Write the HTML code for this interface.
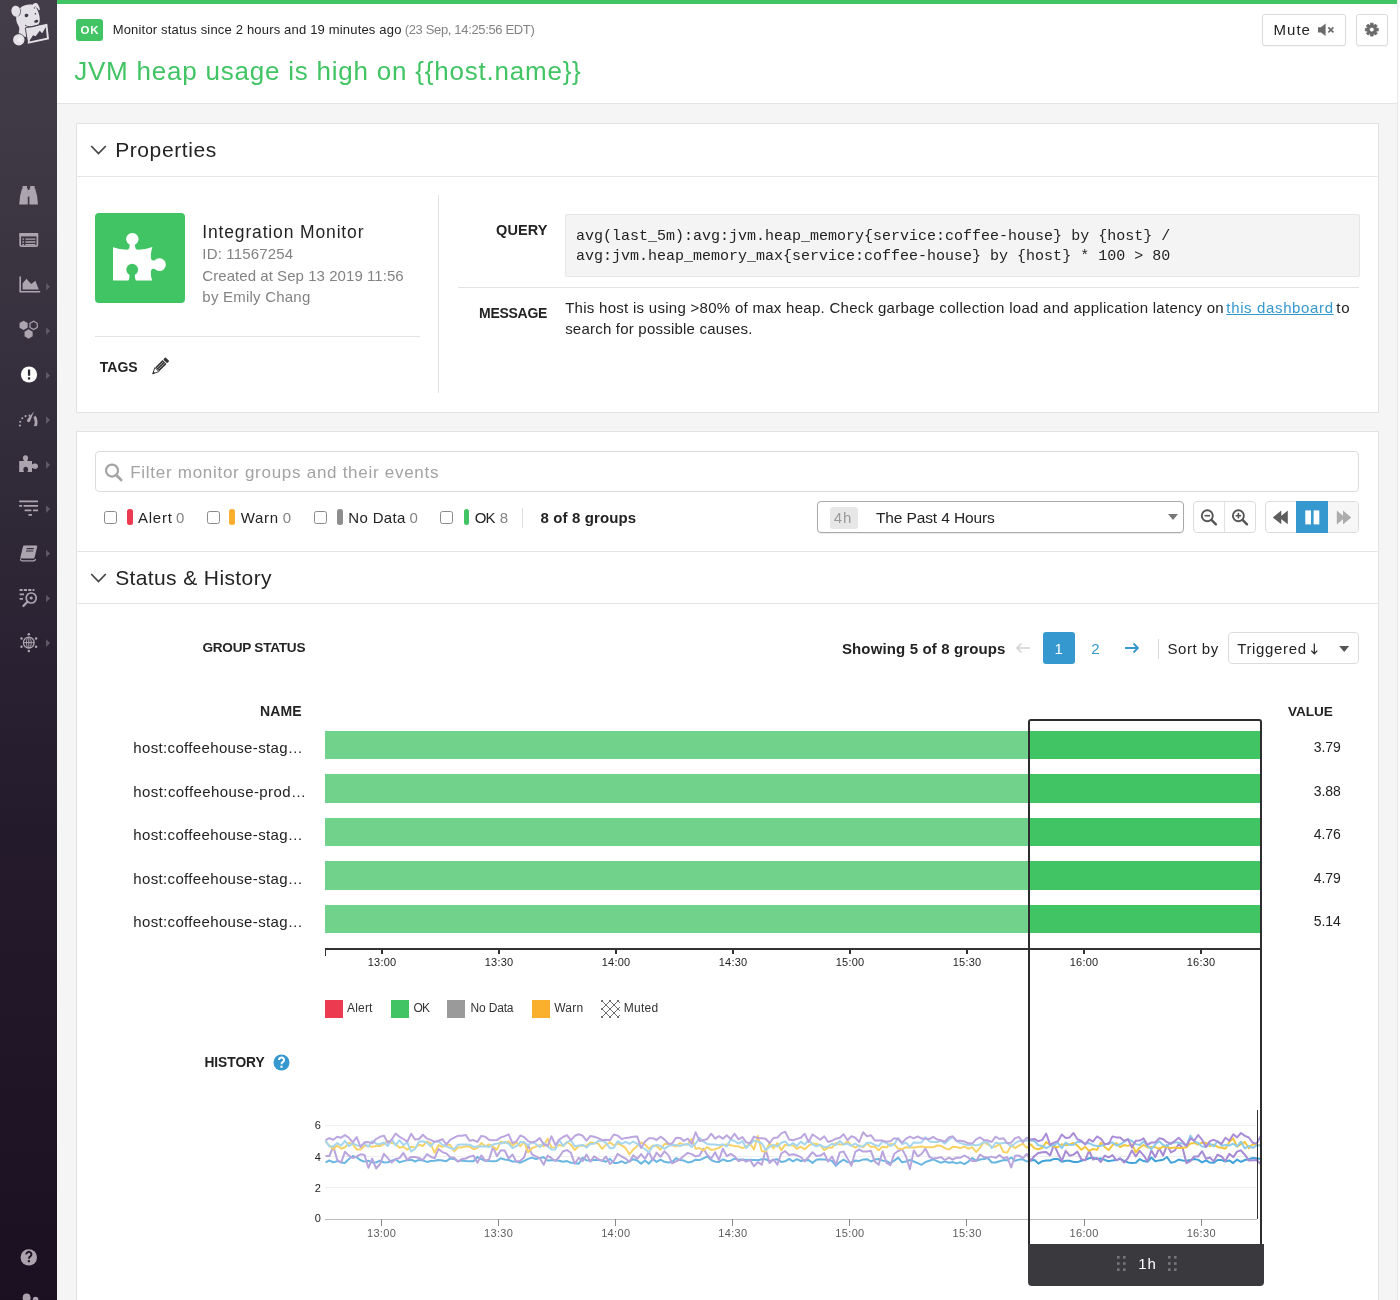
<!DOCTYPE html>
<html><head><meta charset="utf-8"><title>Monitor</title>
<style>
html,body{margin:0;padding:0;}
body{width:1400px;height:1300px;overflow:hidden;position:relative;background:#f5f5f5;font-family:"Liberation Sans",sans-serif;}
.t{position:absolute;white-space:nowrap;font-family:"Liberation Sans",sans-serif;}
</style></head><body>
<div style="position:absolute;left:57px;top:0px;width:1343px;height:1300px;background:#f5f5f5;"></div>
<div style="position:absolute;left:1397px;top:0px;width:3px;height:1300px;background:#fcfcfc;border-left:1px solid #e9e9e9;box-sizing:border-box;"></div>
<div style="position:absolute;left:57px;top:0px;width:1340px;height:103px;background:#fff;border-bottom:1px solid #e4e4e4;"></div>
<div style="position:absolute;left:57px;top:0px;width:1340px;height:4px;background:#41c464;"></div>
<div style="position:absolute;left:76px;top:18.5px;width:27px;height:22.5px;background:#41c464;border-radius:3px;"></div>
<div style="position:absolute;left:1262px;top:14px;width:84px;height:31.5px;box-sizing:border-box;border:1px solid #dadada;border-radius:3px;background:#fff;box-shadow:0 1px 1px rgba(0,0,0,.04);"></div>
<div style="position:absolute;left:1356px;top:14px;width:32px;height:31.5px;box-sizing:border-box;border:1px solid #dadada;border-radius:3px;background:#fff;box-shadow:0 1px 1px rgba(0,0,0,.04);"></div>
<svg style="position:absolute;left:1316px;top:22px" width="20" height="16" viewBox="1316 22 20 16"><path d="M1318 27.3 H1321 L1325.6 23.6 V36 L1321 32.4 H1318 Z" fill="#6a6a6a"/><path d="M1328.3 27.4 L1333.4 32.4 M1333.4 27.4 L1328.3 32.4" stroke="#6a6a6a" stroke-width="1.7"/></svg>
<svg style="position:absolute;left:1362px;top:20px" width="20" height="20" viewBox="1362 20 20 20"><path d="M1378.25 28.21 L1378.25 30.99 L1376.54 30.86 L1376.04 32.06 L1377.34 33.18 L1375.38 35.14 L1374.26 33.84 L1373.06 34.34 L1373.19 36.05 L1370.41 36.05 L1370.54 34.34 L1369.34 33.84 L1368.22 35.14 L1366.26 33.18 L1367.56 32.06 L1367.06 30.86 L1365.35 30.99 L1365.35 28.21 L1367.06 28.34 L1367.56 27.14 L1366.26 26.02 L1368.22 24.06 L1369.34 25.36 L1370.54 24.86 L1370.41 23.15 L1373.19 23.15 L1373.06 24.86 L1374.26 25.36 L1375.38 24.06 L1377.34 26.02 L1376.04 27.14 L1376.54 28.34 Z M1369.40 29.60 a2.40 2.40 0 1 0 4.80 0 a2.40 2.40 0 1 0 -4.80 0 Z" fill="#6a6a6a" fill-rule="evenodd" stroke="#6a6a6a" stroke-width="0.8" stroke-linejoin="round"/></svg>
<div style="position:absolute;left:76px;top:123px;width:1303px;height:290px;box-sizing:border-box;border:1px solid #e2e2e2;background:#fff;"></div>
<div style="position:absolute;left:77px;top:176px;width:1301px;height:1px;background:#e6e6e6;"></div>
<svg style="position:absolute;left:90px;top:144px" width="18" height="12" viewBox="0 0 18 12"><path d="M1.2 2 L8.5 9.6 L15.8 2" fill="none" stroke="#444" stroke-width="1.7"/></svg>
<div style="position:absolute;left:95px;top:213px;width:90px;height:90px;background:#41c464;border-radius:4px;"></div>
<svg style="position:absolute;left:95px;top:213px" width="90" height="90" viewBox="95 213 90 90"><path d="M113 247.2 Q120.5 250 128.2 249.6 Q129.8 248.6 129.7 244.8 A6.2 6.2 0 1 1 135 244.8 Q134.9 248.6 136.5 249.6 Q144.5 250 152.4 247 Q150 254 151.3 259.4 Q152.4 260.8 154.8 260.2 A6.4 6.4 0 1 1 154.8 269 Q152.4 268.4 151.3 269.8 Q150 275 152.2 280.4 L113 280.4 Z" fill="#fff"/><circle cx="132.2" cy="269.6" r="5.9" fill="#41c464"/><path d="M129.6 273.5 H134.8 Q134.7 278.4 136 281 H128.4 Q129.7 278.4 129.6 273.5 Z" fill="#41c464"/></svg>
<div style="position:absolute;left:95px;top:336px;width:325px;height:1px;background:#e2e2e2;"></div>
<div style="position:absolute;left:438px;top:195px;width:1px;height:198px;background:#e2e2e2;"></div>
<svg style="position:absolute;left:150px;top:356px" width="20" height="20" viewBox="150 356 20 20"><g transform="translate(160 366.5) rotate(45)"><rect x="-2.8" y="-10.4" width="5.6" height="3.2" rx="1.1" fill="#333"/><rect x="-2.8" y="-6.4" width="5.6" height="10.2" fill="#333"/><path d="M-2.8 4.4 H2.8 L0 10.4 Z" fill="none" stroke="#333" stroke-width="0.9"/><path d="M-1.1 8 H1.1 L0 10.6 Z" fill="#333"/><path d="M-0.95 -5.6 V3.2 M0.95 -5.6 V3.2" stroke="#fff" stroke-width="0.55"/></g></svg>
<div style="position:absolute;left:565px;top:213.5px;width:794.5px;height:63.5px;box-sizing:border-box;border:1px solid #e6e6e6;background:#f4f4f4;border-radius:2px;"></div>
<div style="position:absolute;left:458px;top:287px;width:901px;height:1px;background:#e2e2e2;"></div>
<div style="position:absolute;left:76px;top:431px;width:1303px;height:900px;box-sizing:border-box;border:1px solid #e2e2e2;background:#fff;"></div>
<div style="position:absolute;left:95px;top:451px;width:1264px;height:40.5px;box-sizing:border-box;border:1px solid #dcdcdc;border-radius:4px;background:#fff;"></div>
<svg style="position:absolute;left:103px;top:462px" width="22" height="20" viewBox="0 0 22 20"><circle cx="9" cy="8.6" r="6" fill="none" stroke="#a4a4a4" stroke-width="2.2"/><path d="M13.2 13 L18.2 18" stroke="#a4a4a4" stroke-width="2.6" stroke-linecap="round"/></svg>
<div style="position:absolute;left:103.8px;top:510.9px;width:13px;height:13px;box-sizing:border-box;border:1px solid #8a8a8a;border-radius:2.5px;background:#fff;"></div>
<div style="position:absolute;left:127.3px;top:509.3px;width:5.8px;height:15.7px;background:#ec3b50;border-radius:2.5px;"></div>
<div style="position:absolute;left:206.6px;top:510.9px;width:13px;height:13px;box-sizing:border-box;border:1px solid #8a8a8a;border-radius:2.5px;background:#fff;"></div>
<div style="position:absolute;left:229.3px;top:509.3px;width:5.8px;height:15.7px;background:#fbb02d;border-radius:2.5px;"></div>
<div style="position:absolute;left:313.6px;top:510.9px;width:13px;height:13px;box-sizing:border-box;border:1px solid #8a8a8a;border-radius:2.5px;background:#fff;"></div>
<div style="position:absolute;left:337.1px;top:509.3px;width:5.8px;height:15.7px;background:#8e8e8e;border-radius:2.5px;"></div>
<div style="position:absolute;left:440px;top:510.9px;width:13px;height:13px;box-sizing:border-box;border:1px solid #8a8a8a;border-radius:2.5px;background:#fff;"></div>
<div style="position:absolute;left:463.6px;top:509.3px;width:5.8px;height:15.7px;background:#41c464;border-radius:2.5px;"></div>
<div style="position:absolute;left:522px;top:508px;width:1px;height:20px;background:#dedede;"></div>
<div style="position:absolute;left:817px;top:501px;width:367px;height:32px;box-sizing:border-box;border:1px solid #a9a9a9;border-radius:4px;background:#fff;box-shadow:0 1px 1px rgba(0,0,0,.08);"></div>
<div style="position:absolute;left:829.7px;top:507px;width:28px;height:21.5px;background:#e7e7e7;border-radius:3px;"></div>
<svg style="position:absolute;left:1167.5px;top:514px" width="10" height="6" viewBox="0 0 10 6"><path d="M0 0 H10 L5 6 Z" fill="#777"/></svg>
<div style="position:absolute;left:1193px;top:501px;width:62.5px;height:32px;box-sizing:border-box;border:1px solid #dcdcdc;border-radius:4px;background:#fff;"></div>
<div style="position:absolute;left:1224px;top:502px;width:1px;height:30px;background:#e2e2e2;"></div>
<svg style="position:absolute;left:1195px;top:503px" width="60" height="28" viewBox="1195 503 60 28"><circle cx="1207.3" cy="515.7" r="5.5" fill="none" stroke="#555" stroke-width="1.9"/><path d="M1211.5 519.9 L1215.9 524.3" stroke="#555" stroke-width="2.4" stroke-linecap="round"/><path d="M1204.5 515.7 H1210.1" stroke="#555" stroke-width="1.6"/><circle cx="1238.4" cy="515.7" r="5.5" fill="none" stroke="#555" stroke-width="1.9"/><path d="M1242.6 519.9 L1247 524.3" stroke="#555" stroke-width="2.4" stroke-linecap="round"/><path d="M1235.6 515.7 H1241.2" stroke="#555" stroke-width="1.6"/><path d="M1238.4 512.9 V518.5" stroke="#555" stroke-width="1.6"/></svg>
<div style="position:absolute;left:1265px;top:501px;width:94px;height:32px;box-sizing:border-box;border:1px solid #dcdcdc;border-radius:4px;background:#fff;"></div>
<div style="position:absolute;left:1328px;top:502px;width:30px;height:30px;background:#f6f6f6;border-radius:0 3px 3px 0;"></div>
<div style="position:absolute;left:1296px;top:501px;width:32px;height:32px;background:#3598cf;"></div>
<svg style="position:absolute;left:1266px;top:503px" width="92" height="28" viewBox="1266 503 92 28"><path d="M1272.8 517.4 L1281.3 510.6 L1281.3 524.2 Z M1279.3 517.4 L1287.8 510.6 L1287.8 524.2 Z" fill="#5e5e5e"/><rect x="1305.3" y="510.4" width="5.7" height="14" fill="#fff"/><rect x="1313.6" y="510.4" width="5.7" height="14" fill="#fff"/><path d="M1336.8 510.4 L1345 517.4 L1336.8 524.4 Z M1343 510.4 L1351.2 517.4 L1343 524.4 Z" fill="#adadad"/></svg>
<div style="position:absolute;left:77px;top:551px;width:1301px;height:1px;background:#e4e4e4;"></div>
<svg style="position:absolute;left:90px;top:572px" width="18" height="12" viewBox="0 0 18 12"><path d="M1.2 2 L8.5 9.6 L15.8 2" fill="none" stroke="#444" stroke-width="1.7"/></svg>
<div style="position:absolute;left:77px;top:603px;width:1301px;height:1px;background:#e4e4e4;"></div>
<svg style="position:absolute;left:1015px;top:642px" width="16" height="12" viewBox="0 0 16 12"><path d="M15 6 H2 M6.5 1.5 L2 6 L6.5 10.5" fill="none" stroke="#d4d4d4" stroke-width="1.7"/></svg>
<div style="position:absolute;left:1042.5px;top:632px;width:32px;height:32px;background:#3598cf;border-radius:3px;"></div>
<svg style="position:absolute;left:1124px;top:642px" width="16" height="12" viewBox="0 0 16 12"><path d="M1 6 H14 M9.5 1.5 L14 6 L9.5 10.5" fill="none" stroke="#3598cf" stroke-width="1.8"/></svg>
<div style="position:absolute;left:1158px;top:639px;width:1px;height:19.5px;background:#d8d8d8;"></div>
<div style="position:absolute;left:1227.5px;top:632px;width:131.5px;height:31.5px;box-sizing:border-box;border:1px solid #dcdcdc;border-radius:4px;background:#fff;"></div>
<svg style="position:absolute;left:1309px;top:642px" width="11" height="14" viewBox="0 0 11 14"><path d="M5.3 1.6 V11.4 M2.3 8.6 L5.3 11.8 L8.3 8.6" fill="none" stroke="#2c2c2c" stroke-width="1.25"/></svg>
<svg style="position:absolute;left:1339.3px;top:646px" width="10.4" height="6" viewBox="0 0 10 6"><path d="M0 0 H10 L5 6 Z" fill="#555"/></svg>
<div style="position:absolute;left:324.6px;top:730.6px;width:704.4px;height:28.4px;background:#71d38b;"></div>
<div style="position:absolute;left:1029px;top:730.6px;width:231px;height:28.4px;background:#41c464;"></div>
<div style="position:absolute;left:324.6px;top:774.2px;width:704.4px;height:28.4px;background:#71d38b;"></div>
<div style="position:absolute;left:1029px;top:774.2px;width:231px;height:28.4px;background:#41c464;"></div>
<div style="position:absolute;left:324.6px;top:817.8px;width:704.4px;height:28.4px;background:#71d38b;"></div>
<div style="position:absolute;left:1029px;top:817.8px;width:231px;height:28.4px;background:#41c464;"></div>
<div style="position:absolute;left:324.6px;top:861.4px;width:704.4px;height:28.4px;background:#71d38b;"></div>
<div style="position:absolute;left:1029px;top:861.4px;width:231px;height:28.4px;background:#41c464;"></div>
<div style="position:absolute;left:324.6px;top:905px;width:704.4px;height:28.4px;background:#71d38b;"></div>
<div style="position:absolute;left:1029px;top:905px;width:231px;height:28.4px;background:#41c464;"></div>
<div style="position:absolute;left:324.6px;top:948px;width:936.4px;height:1.6px;background:#333;"></div>
<div style="position:absolute;left:324.6px;top:948px;width:1.5px;height:8px;background:#333;"></div>
<div style="position:absolute;left:1259.5px;top:948px;width:1.5px;height:8px;background:#333;"></div>
<div style="position:absolute;left:381.3px;top:948px;width:1.4px;height:6px;background:#333;"></div>
<div style="position:absolute;left:498.3px;top:948px;width:1.4px;height:6px;background:#333;"></div>
<div style="position:absolute;left:615.3px;top:948px;width:1.4px;height:6px;background:#333;"></div>
<div style="position:absolute;left:732.3px;top:948px;width:1.4px;height:6px;background:#333;"></div>
<div style="position:absolute;left:849.3px;top:948px;width:1.4px;height:6px;background:#333;"></div>
<div style="position:absolute;left:966.3px;top:948px;width:1.4px;height:6px;background:#333;"></div>
<div style="position:absolute;left:1083.3px;top:948px;width:1.4px;height:6px;background:#333;"></div>
<div style="position:absolute;left:1200.3px;top:948px;width:1.4px;height:6px;background:#333;"></div>
<div style="position:absolute;left:324.6px;top:1000px;width:18.3px;height:18px;background:#ec3b50;"></div>
<div style="position:absolute;left:391.1px;top:1000px;width:18.3px;height:18px;background:#41c464;"></div>
<div style="position:absolute;left:447.1px;top:1000px;width:18.3px;height:18px;background:#9a9a9a;"></div>
<div style="position:absolute;left:532.1px;top:1000px;width:18.3px;height:18px;background:#fbb02d;"></div>
<svg style="position:absolute;left:600.7px;top:1000px" width="19" height="18" viewBox="0 0 19 18"><defs><pattern id="mh" width="8" height="8" x="1" y="1" patternUnits="userSpaceOnUse"><path d="M0 0 L8 8 M8 0 L0 8" stroke="#6f6f6f" stroke-width="1"/></pattern></defs><rect width="19" height="18" fill="url(#mh)"/></svg>
<svg style="position:absolute;left:272.6px;top:1053.6px" width="17" height="17" viewBox="0 0 17 17"><circle cx="8.5" cy="8.5" r="8" fill="#3598cf"/><path d="M5.95 6 a2.55 2.45 0 1 1 4 1.95 q-1.45 0.8 -1.45 2.3" fill="none" stroke="#fff" stroke-width="2"/><rect x="7.45" y="11.7" width="2.1" height="2.1" fill="#fff"/></svg>
<div style="position:absolute;left:325px;top:1124.92px;width:931px;height:1px;background:#eeeeee;"></div>
<div style="position:absolute;left:325px;top:1156.18px;width:931px;height:1px;background:#eeeeee;"></div>
<div style="position:absolute;left:325px;top:1187.44px;width:931px;height:1px;background:#eeeeee;"></div>
<div style="position:absolute;left:325px;top:1218.8px;width:932px;height:1.2px;background:#bdbdbd;"></div>
<div style="position:absolute;left:380.9px;top:1219px;width:1px;height:6.5px;background:#8a8a8a;"></div>
<div style="position:absolute;left:498px;top:1219px;width:1px;height:6.5px;background:#8a8a8a;"></div>
<div style="position:absolute;left:615.1px;top:1219px;width:1px;height:6.5px;background:#8a8a8a;"></div>
<div style="position:absolute;left:732.2px;top:1219px;width:1px;height:6.5px;background:#8a8a8a;"></div>
<div style="position:absolute;left:849.3px;top:1219px;width:1px;height:6.5px;background:#8a8a8a;"></div>
<div style="position:absolute;left:966.4px;top:1219px;width:1px;height:6.5px;background:#8a8a8a;"></div>
<div style="position:absolute;left:1083.5px;top:1219px;width:1px;height:6.5px;background:#8a8a8a;"></div>
<div style="position:absolute;left:1200.6px;top:1219px;width:1px;height:6.5px;background:#8a8a8a;"></div>
<svg style="position:absolute;left:0;top:1100px" width="1400" height="130" viewBox="0 1100 1400 130"><polyline points="325.5,1162.3 329.4,1160.5 333.3,1162.4 337.2,1161.1 341.1,1162.4 345.0,1162.9 348.9,1159.0 352.8,1156.0 356.7,1157.4 360.6,1160.3 364.5,1161.6 368.4,1160.7 372.2,1162.6 376.1,1162.5 380.0,1160.7 383.9,1162.5 387.8,1162.2 391.7,1160.7 395.6,1159.4 399.5,1162.2 403.4,1161.1 407.3,1160.2 411.2,1159.7 415.1,1161.5 419.0,1159.9 422.9,1160.4 426.8,1161.9 430.7,1161.1 434.6,1160.8 438.5,1160.0 442.4,1160.4 446.3,1161.2 450.2,1158.4 454.1,1159.1 458.0,1161.1 461.9,1160.4 465.8,1161.0 469.6,1161.2 473.5,1161.2 477.4,1157.0 481.3,1159.0 485.2,1160.8 489.1,1161.1 493.0,1161.2 496.9,1160.9 500.8,1158.2 504.7,1159.5 508.6,1160.0 512.5,1161.5 516.4,1161.6 520.3,1162.7 524.2,1160.9 528.1,1158.9 532.0,1157.6 535.9,1159.0 539.8,1158.0 543.7,1157.2 547.6,1160.6 551.5,1160.3 555.4,1160.3 559.2,1160.8 563.1,1161.7 567.0,1161.1 570.9,1162.7 574.8,1163.1 578.7,1163.8 582.6,1157.7 586.5,1160.3 590.4,1160.5 594.3,1160.1 598.2,1159.9 602.1,1160.5 606.0,1161.7 609.9,1158.9 613.8,1162.9 617.7,1162.9 621.6,1161.3 625.5,1163.2 629.4,1161.4 633.3,1159.2 637.2,1160.5 641.1,1163.6 645.0,1160.5 648.9,1163.6 652.8,1159.0 656.6,1161.9 660.5,1159.7 664.4,1161.8 668.3,1162.6 672.2,1162.0 676.1,1158.1 680.0,1160.1 683.9,1160.6 687.8,1162.4 691.7,1161.8 695.6,1159.7 699.5,1160.1 703.4,1158.3 707.3,1156.3 711.2,1160.0 715.1,1161.7 719.0,1162.0 722.9,1159.4 726.8,1161.0 730.7,1160.7 734.6,1158.6 738.5,1159.8 742.4,1159.5 746.2,1160.1 750.1,1159.7 754.0,1159.9 757.9,1160.3 761.8,1159.3 765.7,1159.2 769.6,1161.5 773.5,1159.7 777.4,1159.3 781.3,1161.9 785.2,1161.3 789.1,1158.9 793.0,1161.4 796.9,1159.2 800.8,1161.0 804.7,1160.2 808.6,1160.0 812.5,1162.9 816.4,1159.8 820.3,1159.3 824.2,1159.4 828.1,1159.9 832.0,1160.9 835.9,1165.8 839.8,1162.1 843.6,1159.7 847.5,1162.1 851.4,1162.5 855.3,1160.6 859.2,1160.9 863.1,1159.6 867.0,1159.2 870.9,1161.5 874.8,1159.6 878.7,1158.9 882.6,1160.7 886.5,1161.1 890.4,1163.3 894.3,1160.6 898.2,1157.6 902.1,1162.3 906.0,1161.6 909.9,1160.0 913.8,1161.5 917.7,1163.1 921.6,1164.8 925.5,1162.0 929.4,1160.8 933.2,1159.3 937.1,1161.1 941.0,1162.8 944.9,1161.4 948.8,1162.7 952.7,1162.1 956.6,1163.4 960.5,1162.3 964.4,1164.1 968.3,1161.7 972.2,1158.1 976.1,1160.8 980.0,1159.5 983.9,1159.0 987.8,1158.0 991.7,1162.4 995.6,1162.5 999.5,1161.2 1003.4,1160.1 1007.3,1160.3 1011.2,1157.5 1015.1,1160.7 1019.0,1159.6 1022.9,1159.3 1026.8,1161.5 1030.6,1160.6 1034.5,1159.9 1038.4,1163.6 1042.3,1161.2 1046.2,1160.6 1050.1,1160.5 1054.0,1158.9 1057.9,1159.0 1061.8,1161.8 1065.7,1160.7 1069.6,1160.8 1073.5,1162.0 1077.4,1162.1 1081.3,1160.8 1085.2,1159.7 1089.1,1158.3 1093.0,1157.7 1096.9,1159.1 1100.8,1158.5 1104.7,1159.9 1108.6,1161.3 1112.5,1160.4 1116.4,1160.1 1120.2,1158.8 1124.1,1160.8 1128.0,1162.4 1131.9,1162.9 1135.8,1162.8 1139.7,1159.1 1143.6,1161.1 1147.5,1161.7 1151.4,1157.5 1155.3,1161.3 1159.2,1160.4 1163.1,1159.7 1167.0,1157.0 1170.9,1162.8 1174.8,1161.9 1178.7,1159.5 1182.6,1160.5 1186.5,1160.7 1190.4,1160.0 1194.3,1159.0 1198.2,1159.9 1202.1,1162.4 1206.0,1160.3 1209.9,1162.6 1213.8,1162.7 1217.6,1160.0 1221.5,1160.1 1225.4,1161.5 1229.3,1160.4 1233.2,1163.1 1237.1,1159.6 1241.0,1161.8 1244.9,1160.0 1248.8,1159.2 1252.7,1157.9 1256.6,1158.2 1260.5,1158.9" fill="none" stroke="#3fa2d9" stroke-width="2" stroke-linejoin="round"/><polyline points="325.5,1156.0 329.4,1156.0 333.3,1146.4 337.2,1160.0 341.1,1162.4 345.0,1151.8 348.9,1155.6 352.8,1158.0 356.7,1156.3 360.6,1154.3 364.5,1154.9 368.4,1167.8 372.2,1158.6 376.1,1168.5 380.0,1164.0 383.9,1153.8 387.8,1158.2 391.7,1162.6 395.6,1159.0 399.5,1158.1 403.4,1152.9 407.3,1159.9 411.2,1156.9 415.1,1157.0 419.0,1158.0 422.9,1160.0 426.8,1154.2 430.7,1156.7 434.6,1158.3 438.5,1148.9 442.4,1152.1 446.3,1153.4 450.2,1157.2 454.1,1157.8 458.0,1161.7 461.9,1159.1 465.8,1158.5 469.6,1156.7 473.5,1155.6 477.4,1162.7 481.3,1155.4 485.2,1160.7 489.1,1159.5 493.0,1146.8 496.9,1156.1 500.8,1150.2 504.7,1150.5 508.6,1158.5 512.5,1154.5 516.4,1161.8 520.3,1160.7 524.2,1157.3 528.1,1145.2 532.0,1154.4 535.9,1156.4 539.8,1158.3 543.7,1164.8 547.6,1155.6 551.5,1158.2 555.4,1161.0 559.2,1157.0 563.1,1151.3 567.0,1150.1 570.9,1152.8 574.8,1163.8 578.7,1157.7 582.6,1161.3 586.5,1154.5 590.4,1161.6 594.3,1156.2 598.2,1159.3 602.1,1160.9 606.0,1156.5 609.9,1164.0 613.8,1160.9 617.7,1153.8 621.6,1156.5 625.5,1158.6 629.4,1161.8 633.3,1155.3 637.2,1158.8 641.1,1154.1 645.0,1158.8 648.9,1151.9 652.8,1160.2 656.6,1152.6 660.5,1156.8 664.4,1151.3 668.3,1155.1 672.2,1163.3 676.1,1161.4 680.0,1159.3 683.9,1155.7 687.8,1152.9 691.7,1154.1 695.6,1156.4 699.5,1155.5 703.4,1148.8 707.3,1155.0 711.2,1158.6 715.1,1152.2 719.0,1160.0 722.9,1148.7 726.8,1156.1 730.7,1153.9 734.6,1156.3 738.5,1161.1 742.4,1159.7 746.2,1161.6 750.1,1159.9 754.0,1166.3 757.9,1162.1 761.8,1164.7 765.7,1149.6 769.6,1163.1 773.5,1159.5 777.4,1164.6 781.3,1153.5 785.2,1151.1 789.1,1155.0 793.0,1154.3 796.9,1155.3 800.8,1157.1 804.7,1161.4 808.6,1157.0 812.5,1152.2 816.4,1156.0 820.3,1155.6 824.2,1153.1 828.1,1161.6 832.0,1156.6 835.9,1164.5 839.8,1152.4 843.6,1151.5 847.5,1158.4 851.4,1165.8 855.3,1151.8 859.2,1149.4 863.1,1151.6 867.0,1151.4 870.9,1150.8 874.8,1161.6 878.7,1164.8 882.6,1151.3 886.5,1162.9 890.4,1165.2 894.3,1153.7 898.2,1151.0 902.1,1149.1 906.0,1156.5 909.9,1169.1 913.8,1150.4 917.7,1156.3 921.6,1154.0 925.5,1148.7 929.4,1156.8 933.2,1158.6 937.1,1158.0 941.0,1157.1 944.9,1160.0 948.8,1157.7 952.7,1159.5 956.6,1157.6 960.5,1157.7 964.4,1155.5 968.3,1157.7 972.2,1161.0 976.1,1161.1 980.0,1154.5 983.9,1157.1 987.8,1157.6 991.7,1156.6 995.6,1157.9 999.5,1155.1 1003.4,1158.2 1007.3,1157.1 1011.2,1167.5 1015.1,1155.7 1019.0,1155.4 1022.9,1158.1 1026.8,1154.0 1030.6,1160.6 1034.5,1156.0 1038.4,1152.9 1042.3,1152.2 1046.2,1151.9 1050.1,1155.4 1054.0,1144.6 1057.9,1153.2 1061.8,1160.9 1065.7,1150.8 1069.6,1155.7 1073.5,1154.6 1077.4,1151.6 1081.3,1159.2 1085.2,1160.3 1089.1,1150.5 1093.0,1159.6 1096.9,1157.9 1100.8,1162.1 1104.7,1155.6 1108.6,1157.4 1112.5,1155.1 1116.4,1160.3 1120.2,1158.2 1124.1,1162.6 1128.0,1158.0 1131.9,1150.5 1135.8,1156.4 1139.7,1150.8 1143.6,1155.3 1147.5,1161.2 1151.4,1150.5 1155.3,1157.2 1159.2,1148.3 1163.1,1155.7 1167.0,1145.1 1170.9,1152.4 1174.8,1150.4 1178.7,1144.0 1182.6,1147.9 1186.5,1163.2 1190.4,1161.2 1194.3,1156.5 1198.2,1156.4 1202.1,1151.2 1206.0,1158.7 1209.9,1157.5 1213.8,1161.2 1217.6,1154.6 1221.5,1156.5 1225.4,1161.1 1229.3,1153.8 1233.2,1157.1 1237.1,1151.6 1241.0,1150.3 1244.9,1154.8 1248.8,1160.6 1252.7,1160.2 1256.6,1160.0 1260.5,1163.9" fill="none" stroke="#a68bd4" stroke-width="2" stroke-linejoin="round"/><polyline points="325.5,1141.6 329.4,1145.6 333.3,1149.2 337.2,1145.6 341.1,1148.8 345.0,1147.3 348.9,1142.8 352.8,1144.3 356.7,1149.4 360.6,1149.4 364.5,1145.8 368.4,1145.7 372.2,1146.9 376.1,1146.0 380.0,1146.1 383.9,1144.2 387.8,1140.9 391.7,1143.0 395.6,1143.9 399.5,1147.8 403.4,1146.7 407.3,1149.7 411.2,1146.7 415.1,1147.7 419.0,1144.8 422.9,1146.0 426.8,1141.4 430.7,1143.3 434.6,1152.8 438.5,1145.1 442.4,1147.0 446.3,1144.4 450.2,1145.1 454.1,1151.2 458.0,1147.6 461.9,1147.4 465.8,1146.2 469.6,1146.6 473.5,1149.3 477.4,1148.1 481.3,1143.1 485.2,1146.3 489.1,1144.4 493.0,1146.5 496.9,1149.6 500.8,1141.6 504.7,1143.0 508.6,1141.3 512.5,1145.8 516.4,1142.3 520.3,1146.2 524.2,1141.9 528.1,1152.3 532.0,1148.2 535.9,1146.5 539.8,1145.1 543.7,1146.2 547.6,1138.7 551.5,1147.4 555.4,1147.2 559.2,1144.9 563.1,1146.2 567.0,1142.0 570.9,1144.7 574.8,1150.0 578.7,1146.0 582.6,1145.4 586.5,1145.8 590.4,1142.5 594.3,1143.0 598.2,1143.5 602.1,1148.9 606.0,1144.9 609.9,1142.2 613.8,1145.3 617.7,1143.5 621.6,1145.3 625.5,1147.9 629.4,1154.3 633.3,1149.4 637.2,1145.9 641.1,1142.4 645.0,1144.5 648.9,1148.8 652.8,1145.6 656.6,1146.0 660.5,1149.8 664.4,1144.0 668.3,1143.8 672.2,1145.3 676.1,1146.5 680.0,1143.1 683.9,1144.8 687.8,1144.4 691.7,1138.8 695.6,1148.7 699.5,1148.1 703.4,1150.4 707.3,1147.1 711.2,1149.9 715.1,1149.3 719.0,1147.9 722.9,1145.1 726.8,1144.2 730.7,1145.3 734.6,1145.9 738.5,1146.4 742.4,1148.2 746.2,1146.6 750.1,1143.6 754.0,1149.5 757.9,1136.0 761.8,1151.3 765.7,1151.5 769.6,1143.0 773.5,1148.4 777.4,1143.0 781.3,1150.2 785.2,1144.7 789.1,1145.2 793.0,1145.2 796.9,1148.8 800.8,1146.7 804.7,1149.3 808.6,1145.7 812.5,1143.6 816.4,1143.9 820.3,1145.3 824.2,1150.2 828.1,1147.6 832.0,1147.7 835.9,1143.0 839.8,1144.5 843.6,1144.6 847.5,1141.2 851.4,1145.4 855.3,1147.6 859.2,1145.3 863.1,1147.3 867.0,1143.3 870.9,1147.1 874.8,1146.6 878.7,1150.2 882.6,1146.6 886.5,1147.5 890.4,1144.1 894.3,1144.3 898.2,1148.6 902.1,1149.1 906.0,1147.2 909.9,1147.6 913.8,1147.5 917.7,1147.0 921.6,1146.4 925.5,1146.9 929.4,1147.3 933.2,1147.3 937.1,1145.5 941.0,1145.8 944.9,1148.1 948.8,1149.6 952.7,1146.9 956.6,1147.0 960.5,1148.2 964.4,1146.5 968.3,1148.7 972.2,1147.1 976.1,1152.0 980.0,1147.7 983.9,1141.7 987.8,1144.4 991.7,1146.7 995.6,1146.8 999.5,1144.0 1003.4,1151.9 1007.3,1152.6 1011.2,1145.1 1015.1,1148.1 1019.0,1145.6 1022.9,1143.6 1026.8,1147.9 1030.6,1144.2 1034.5,1148.4 1038.4,1149.3 1042.3,1147.7 1046.2,1142.0 1050.1,1144.9 1054.0,1146.4 1057.9,1147.2 1061.8,1144.3 1065.7,1145.3 1069.6,1144.5 1073.5,1142.9 1077.4,1145.6 1081.3,1149.8 1085.2,1146.9 1089.1,1150.9 1093.0,1149.0 1096.9,1149.9 1100.8,1142.8 1104.7,1146.9 1108.6,1150.1 1112.5,1145.2 1116.4,1143.2 1120.2,1147.1 1124.1,1145.0 1128.0,1145.9 1131.9,1144.4 1135.8,1152.3 1139.7,1147.7 1143.6,1145.0 1147.5,1147.5 1151.4,1146.9 1155.3,1147.1 1159.2,1148.8 1163.1,1146.6 1167.0,1147.1 1170.9,1148.3 1174.8,1147.4 1178.7,1148.0 1182.6,1147.9 1186.5,1147.2 1190.4,1143.6 1194.3,1142.9 1198.2,1144.6 1202.1,1142.7 1206.0,1142.8 1209.9,1146.1 1213.8,1144.5 1217.6,1146.9 1221.5,1147.7 1225.4,1148.8 1229.3,1142.1 1233.2,1138.3 1237.1,1146.7 1241.0,1144.0 1244.9,1142.0 1248.8,1148.2 1252.7,1144.3 1256.6,1144.8 1260.5,1145.4" fill="none" stroke="#f4c63d" stroke-width="2" stroke-linejoin="round"/><polyline points="325.5,1140.6 329.4,1146.5 333.3,1146.2 337.2,1143.0 341.1,1145.7 345.0,1140.8 348.9,1146.3 352.8,1143.3 356.7,1145.2 360.6,1146.0 364.5,1143.4 368.4,1146.7 372.2,1141.1 376.1,1143.7 380.0,1144.2 383.9,1142.5 387.8,1146.1 391.7,1139.3 395.6,1145.3 399.5,1140.2 403.4,1145.1 407.3,1142.5 411.2,1151.5 415.1,1148.9 419.0,1141.4 422.9,1141.3 426.8,1142.6 430.7,1146.4 434.6,1141.7 438.5,1141.3 442.4,1144.8 446.3,1146.3 450.2,1148.1 454.1,1149.2 458.0,1144.7 461.9,1144.5 465.8,1144.5 469.6,1144.7 473.5,1146.9 477.4,1146.4 481.3,1146.4 485.2,1146.3 489.1,1147.1 493.0,1144.5 496.9,1143.6 500.8,1143.5 504.7,1142.0 508.6,1143.6 512.5,1148.1 516.4,1146.2 520.3,1142.1 524.2,1142.3 528.1,1145.2 532.0,1142.0 535.9,1143.9 539.8,1147.1 543.7,1142.8 547.6,1146.3 551.5,1149.5 555.4,1149.5 559.2,1139.9 563.1,1145.7 567.0,1142.2 570.9,1140.4 574.8,1146.3 578.7,1145.6 582.6,1144.9 586.5,1147.5 590.4,1143.9 594.3,1143.7 598.2,1141.1 602.1,1140.5 606.0,1142.8 609.9,1148.2 613.8,1147.9 617.7,1141.2 621.6,1143.8 625.5,1141.8 629.4,1143.9 633.3,1141.5 637.2,1143.8 641.1,1147.2 645.0,1149.1 648.9,1152.3 652.8,1146.3 656.6,1145.0 660.5,1146.0 664.4,1148.9 668.3,1146.1 672.2,1145.1 676.1,1145.1 680.0,1146.0 683.9,1144.4 687.8,1143.9 691.7,1146.9 695.6,1143.5 699.5,1137.8 703.4,1141.4 707.3,1144.1 711.2,1144.6 715.1,1144.6 719.0,1145.2 722.9,1144.3 726.8,1146.5 730.7,1139.5 734.6,1141.0 738.5,1143.6 742.4,1141.0 746.2,1148.0 750.1,1144.0 754.0,1140.4 757.9,1141.7 761.8,1143.2 765.7,1149.9 769.6,1146.7 773.5,1144.9 777.4,1146.4 781.3,1142.7 785.2,1141.4 789.1,1145.7 793.0,1143.1 796.9,1146.0 800.8,1141.6 804.7,1144.7 808.6,1139.8 812.5,1144.4 816.4,1146.4 820.3,1144.8 824.2,1147.3 828.1,1146.4 832.0,1143.7 835.9,1145.0 839.8,1141.0 843.6,1144.6 847.5,1143.6 851.4,1145.9 855.3,1143.5 859.2,1146.4 863.1,1146.2 867.0,1142.8 870.9,1142.8 874.8,1144.9 878.7,1146.1 882.6,1141.4 886.5,1143.2 890.4,1145.9 894.3,1144.1 898.2,1138.1 902.1,1144.1 906.0,1142.6 909.9,1146.7 913.8,1142.4 917.7,1142.8 921.6,1142.5 925.5,1137.2 929.4,1141.4 933.2,1141.9 937.1,1142.1 941.0,1140.9 944.9,1143.6 948.8,1140.0 952.7,1137.0 956.6,1141.0 960.5,1143.1 964.4,1144.3 968.3,1145.3 972.2,1144.6 976.1,1145.4 980.0,1144.5 983.9,1141.9 987.8,1142.3 991.7,1148.3 995.6,1142.7 999.5,1143.4 1003.4,1143.1 1007.3,1143.0 1011.2,1146.4 1015.1,1143.2 1019.0,1141.2 1022.9,1140.5 1026.8,1140.6 1030.6,1140.6 1034.5,1141.1 1038.4,1145.3 1042.3,1145.9 1046.2,1148.2 1050.1,1146.0 1054.0,1145.0 1057.9,1142.9 1061.8,1148.1 1065.7,1142.6 1069.6,1145.0 1073.5,1144.8 1077.4,1141.7 1081.3,1141.9 1085.2,1143.5 1089.1,1143.1 1093.0,1145.2 1096.9,1146.0 1100.8,1145.9 1104.7,1144.8 1108.6,1142.9 1112.5,1142.5 1116.4,1145.5 1120.2,1144.3 1124.1,1141.9 1128.0,1139.1 1131.9,1141.1 1135.8,1144.1 1139.7,1145.1 1143.6,1141.4 1147.5,1146.3 1151.4,1149.1 1155.3,1144.5 1159.2,1141.3 1163.1,1144.9 1167.0,1146.1 1170.9,1142.7 1174.8,1142.6 1178.7,1142.6 1182.6,1143.6 1186.5,1145.9 1190.4,1135.6 1194.3,1141.4 1198.2,1143.0 1202.1,1146.5 1206.0,1146.9 1209.9,1143.6 1213.8,1146.4 1217.6,1141.0 1221.5,1145.7 1225.4,1145.0 1229.3,1145.5 1233.2,1143.7 1237.1,1146.4 1241.0,1141.7 1244.9,1148.5 1248.8,1145.9 1252.7,1147.9 1256.6,1145.6 1260.5,1145.4" fill="none" stroke="#8dcbeb" stroke-width="2" stroke-linejoin="round"/><polyline points="325.5,1140.2 329.4,1138.2 333.3,1139.7 337.2,1136.7 341.1,1137.7 345.0,1135.1 348.9,1137.8 352.8,1142.4 356.7,1137.0 360.6,1147.1 364.5,1142.2 368.4,1142.1 372.2,1143.4 376.1,1139.0 380.0,1136.8 383.9,1135.6 387.8,1142.8 391.7,1139.7 395.6,1133.5 399.5,1136.8 403.4,1139.0 407.3,1141.7 411.2,1133.8 415.1,1139.6 419.0,1139.0 422.9,1134.8 426.8,1138.4 430.7,1139.9 434.6,1141.9 438.5,1140.7 442.4,1139.2 446.3,1144.5 450.2,1139.9 454.1,1137.7 458.0,1135.8 461.9,1135.7 465.8,1135.1 469.6,1140.8 473.5,1140.1 477.4,1141.9 481.3,1135.9 485.2,1136.8 489.1,1139.9 493.0,1140.2 496.9,1140.1 500.8,1137.4 504.7,1136.2 508.6,1134.3 512.5,1143.1 516.4,1141.3 520.3,1135.5 524.2,1137.1 528.1,1141.1 532.0,1142.6 535.9,1141.1 539.8,1138.1 543.7,1144.3 547.6,1146.0 551.5,1136.3 555.4,1145.2 559.2,1139.5 563.1,1137.0 567.0,1135.2 570.9,1140.1 574.8,1135.8 578.7,1134.2 582.6,1135.6 586.5,1140.6 590.4,1136.0 594.3,1136.7 598.2,1138.1 602.1,1140.2 606.0,1139.8 609.9,1140.2 613.8,1134.5 617.7,1135.6 621.6,1139.1 625.5,1137.9 629.4,1137.6 633.3,1136.8 637.2,1136.4 641.1,1148.0 645.0,1141.5 648.9,1138.2 652.8,1138.2 656.6,1140.0 660.5,1136.7 664.4,1139.3 668.3,1143.7 672.2,1143.4 676.1,1137.7 680.0,1137.9 683.9,1140.9 687.8,1138.5 691.7,1144.0 695.6,1132.2 699.5,1140.9 703.4,1140.1 707.3,1139.0 711.2,1133.7 715.1,1138.7 719.0,1136.2 722.9,1138.7 726.8,1135.3 730.7,1139.0 734.6,1133.7 738.5,1139.4 742.4,1137.1 746.2,1142.4 750.1,1143.3 754.0,1136.6 757.9,1138.1 761.8,1138.3 765.7,1138.8 769.6,1143.0 773.5,1138.0 777.4,1137.6 781.3,1133.4 785.2,1131.7 789.1,1139.4 793.0,1140.2 796.9,1138.9 800.8,1137.8 804.7,1133.7 808.6,1142.1 812.5,1134.5 816.4,1137.0 820.3,1139.7 824.2,1136.2 828.1,1142.0 832.0,1140.8 835.9,1138.7 839.8,1137.8 843.6,1134.3 847.5,1140.3 851.4,1136.3 855.3,1137.8 859.2,1142.0 863.1,1132.3 867.0,1136.2 870.9,1135.2 874.8,1140.5 878.7,1140.5 882.6,1140.6 886.5,1141.8 890.4,1141.3 894.3,1138.2 898.2,1138.9 902.1,1142.8 906.0,1138.6 909.9,1136.6 913.8,1138.3 917.7,1136.4 921.6,1138.6 925.5,1138.8 929.4,1139.1 933.2,1136.9 937.1,1139.5 941.0,1140.3 944.9,1141.6 948.8,1137.5 952.7,1136.3 956.6,1140.8 960.5,1140.8 964.4,1141.4 968.3,1143.3 972.2,1143.6 976.1,1139.4 980.0,1137.3 983.9,1140.1 987.8,1140.3 991.7,1142.0 995.6,1136.7 999.5,1139.0 1003.4,1138.2 1007.3,1143.1 1011.2,1142.7 1015.1,1138.1 1019.0,1137.0 1022.9,1142.4 1026.8,1137.7 1030.6,1139.6 1034.5,1138.9 1038.4,1141.3 1042.3,1139.9 1046.2,1133.5 1050.1,1144.9 1054.0,1142.6 1057.9,1141.3 1061.8,1134.6 1065.7,1138.1 1069.6,1137.4 1073.5,1133.0 1077.4,1139.3 1081.3,1140.7 1085.2,1144.6 1089.1,1139.3 1093.0,1141.6 1096.9,1136.5 1100.8,1138.6 1104.7,1144.1 1108.6,1144.1 1112.5,1136.4 1116.4,1137.4 1120.2,1137.5 1124.1,1140.9 1128.0,1139.3 1131.9,1147.5 1135.8,1140.8 1139.7,1140.6 1143.6,1138.4 1147.5,1144.9 1151.4,1142.4 1155.3,1142.4 1159.2,1138.3 1163.1,1139.1 1167.0,1142.2 1170.9,1143.9 1174.8,1141.0 1178.7,1137.7 1182.6,1141.8 1186.5,1146.0 1190.4,1138.5 1194.3,1140.6 1198.2,1135.0 1202.1,1139.9 1206.0,1146.9 1209.9,1141.1 1213.8,1139.8 1217.6,1141.6 1221.5,1143.9 1225.4,1137.7 1229.3,1140.8 1233.2,1134.4 1237.1,1137.4 1241.0,1133.0 1244.9,1135.9 1248.8,1137.5 1252.7,1142.7 1256.6,1143.6 1260.5,1136.6" fill="none" stroke="#aa8dd6" stroke-width="2" stroke-linejoin="round"/></svg>
<div style="position:absolute;left:322px;top:1104px;width:706px;height:112px;background:rgba(255,255,255,.22);"></div>
<div style="position:absolute;left:1257px;top:1110px;width:1.2px;height:109px;background:#333;"></div>
<div style="position:absolute;left:1028px;top:719px;width:234px;height:530px;box-sizing:border-box;border:2px solid #2d2d2f;border-radius:3px 3px 0 0;border-bottom:none;"></div>
<div style="position:absolute;left:1028px;top:1244.4px;width:236px;height:42px;background:#3a393d;border-radius:0 0 4px 4px;"></div>
<svg style="position:absolute;left:1117.3px;top:1256px" width="9" height="16" viewBox="0 0 9 16"><rect x="0" y="0" width="2.6" height="2.6" fill="#77767a"/><rect x="6" y="0" width="2.6" height="2.6" fill="#77767a"/><rect x="0" y="6.2" width="2.6" height="2.6" fill="#77767a"/><rect x="6" y="6.2" width="2.6" height="2.6" fill="#77767a"/><rect x="0" y="12.4" width="2.6" height="2.6" fill="#77767a"/><rect x="6" y="12.4" width="2.6" height="2.6" fill="#77767a"/></svg>
<svg style="position:absolute;left:1168.4px;top:1256px" width="9" height="16" viewBox="0 0 9 16"><rect x="0" y="0" width="2.6" height="2.6" fill="#77767a"/><rect x="6" y="0" width="2.6" height="2.6" fill="#77767a"/><rect x="0" y="6.2" width="2.6" height="2.6" fill="#77767a"/><rect x="6" y="6.2" width="2.6" height="2.6" fill="#77767a"/><rect x="0" y="12.4" width="2.6" height="2.6" fill="#77767a"/><rect x="6" y="12.4" width="2.6" height="2.6" fill="#77767a"/></svg>
<div style="position:absolute;left:0px;top:0px;width:57px;height:1300px;background:linear-gradient(180deg,#433d49 0%,#3d3643 15%,#2f2837 40%,#231a2b 65%,#1b1021 100%);"></div>
<svg style="position:absolute;left:8px;top:0px" width="46" height="50" viewBox="8 0 46 50"><g fill="#e3e0e6"><path d="M19.6 8.4 C22.5 5.4 28 4 32.6 4.8 C33.6 3 36.4 2 38 4.4 C39.2 6.4 40 8.6 39.8 9.9 L38.7 10.2 C38 8.6 36.8 7.4 35.8 7 C38 10.4 39.6 14.6 39.8 19 C40 22 39 24 37.6 25.2 L30 30 L27.4 36.4 L24 37 L19 34.4 L18.8 32 C19.8 29.4 19.4 27.4 17.8 24.6 C16.4 22 15.8 19.4 16.4 16 Z"/><ellipse cx="16" cy="11.2" rx="4.6" ry="5.5" transform="rotate(-12 16 11.2)"/><circle cx="18.8" cy="39.7" r="5.7"/></g><path d="M20.2 8.6 C21 11 20.6 14.4 18.4 16.4" fill="none" stroke="#403a46" stroke-width="0.7"/><path d="M35.4 6.6 C34.6 6.8 34 7.6 34.4 8.8" fill="none" stroke="#403a46" stroke-width="0.7"/><path d="M14.4 34.6 C18 32.6 22.6 33.6 24.4 37.4" fill="none" stroke="#403a46" stroke-width="0.8"/><path d="M25.6 28.2 L47.3 23.8 L49 39.2 L27.8 43.7 Z" fill="#e3e0e6"/><path d="M27.6 42.6 L25.3 27.9 L38 25.2" fill="none" stroke="#403a46" stroke-width="0.9"/><path d="M29.5 41.4 L29.8 40.2 L33.1 35.2 L35.6 36.2 L39.8 30.8 L42.1 33.3 L45.8 27.2 L46.9 37.8 Z" fill="#403a46"/><path d="M25 25 C27.6 27.4 33 27.6 38 24.8" fill="none" stroke="#403a46" stroke-width="0.9"/><ellipse cx="26.5" cy="15.4" rx="1.9" ry="1.7" fill="#403a46" transform="rotate(-15 26.5 15.4)"/><ellipse cx="36.2" cy="21.3" rx="2.1" ry="1.45" fill="#403a46" transform="rotate(-12 36.2 21.3)"/><circle cx="35.4" cy="13.8" r="0.8" fill="#403a46"/><circle cx="19.8" cy="39.4" r="2.6" fill="#efedf1"/></svg><svg style="position:absolute;left:16px;top:182px" width="26" height="26" viewBox="16 182 26 26"><g fill="#aca5b0"><path d="M22.6 186 H27 V188.4 H27.8 V204.6 H19.2 Q19.4 196 22 188.4 H22.6 Z"/><path d="M30.2 186 H34.6 V188.4 H35.2 Q37.8 196 38 204.6 H29.4 V188.4 H30.2 Z"/><rect x="27.2" y="190" width="2.8" height="6.6"/></g></svg><svg style="position:absolute;left:16px;top:230px" width="26" height="20" viewBox="16 230 26 20"><rect x="20.2" y="233.8" width="17.2" height="12.4" rx="1.2" fill="none" stroke="#aca5b0" stroke-width="1.7"/><rect x="19.4" y="233" width="18.8" height="3.4" fill="#aca5b0"/><path d="M22.4 239.2 H24 M25.4 239.2 H35.4 M22.4 242 H24 M25.4 242 H35.4 M22.4 244.6 H24 M25.4 244.6 H35.4" stroke="#aca5b0" stroke-width="1.3"/></svg><svg style="position:absolute;left:16px;top:274px" width="40" height="22" viewBox="16 274 40 22"><path d="M20.2 276.6 V291.8 H40.2" fill="none" stroke="#aca5b0" stroke-width="1.6"/><path d="M22.6 289.6 V283.4 L26.4 278.8 L31.2 284 L35.4 280.8 L38.8 289.6 Z" fill="#aca5b0"/><path d="M46.1 283 L50 286.8 L46.1 290.6 Z" fill="#615a67"/></svg><svg style="position:absolute;left:16px;top:316px" width="40" height="28" viewBox="16 316 40 28"><polygon points="27.67,327.75 23.60,330.10 19.53,327.75 19.53,323.05 23.60,320.70 27.67,323.05" fill="#aca5b0"/><polygon points="37.24,327.50 33.60,329.60 29.96,327.50 29.96,323.30 33.60,321.20 37.24,323.30" fill="none" stroke="#aca5b0" stroke-width="1.2"/><polygon points="32.67,336.35 28.60,338.70 24.53,336.35 24.53,331.65 28.60,329.30 32.67,331.65" fill="#aca5b0"/><path d="M46.1 327.3 L50 331.1 L46.1 334.9 Z" fill="#615a67"/></svg><svg style="position:absolute;left:16px;top:362px" width="40" height="26" viewBox="16 362 40 26"><circle cx="29" cy="374.5" r="8.1" fill="#fff"/><rect x="27.9" y="369.4" width="2.3" height="6.4" rx="0.5" fill="#2c2532"/><rect x="27.9" y="377.2" width="2.3" height="2.3" rx="0.5" fill="#2c2532"/><path d="M46.1 371.7 L50 375.5 L46.1 379.3 Z" fill="#615a67"/></svg><svg style="position:absolute;left:16px;top:407px" width="40" height="24" viewBox="16 407 40 24"><circle cx="19.89" cy="425.62" r="1.05" fill="#aca5b0"/><circle cx="20.23" cy="421.68" r="1.05" fill="#aca5b0"/><circle cx="22.27" cy="418.29" r="1.05" fill="#aca5b0"/><circle cx="25.59" cy="416.13" r="1.05" fill="#aca5b0"/><circle cx="29.52" cy="415.65" r="1.05" fill="#aca5b0"/><path d="M34 411.2 L30.2 421 Q28.8 423 27.4 421.8 Q26.4 420.6 27.6 419 Z" fill="#aca5b0"/><path d="M35.4 415.6 Q38.6 420 37 426 L34 426.2 Q35.6 421.4 33.4 417.6 Z" fill="#aca5b0"/><path d="M46.1 416.3 L50 420.1 L46.1 423.9 Z" fill="#615a67"/></svg><svg style="position:absolute;left:16px;top:452px" width="40" height="24" viewBox="16 452 40 24"><path d="M19.2 461 H24 Q23 459.6 23 458.6 A2.6 2.6 0 1 1 28 458.6 Q28 459.6 27.2 461 H32 V464.6 Q33.2 463.6 34.6 463.6 A2.7 2.7 0 1 1 34.6 468.8 Q33.2 468.8 32 467.8 V471.9 H27.4 Q28 470.6 28 469.8 A2.4 2.4 0 1 0 23.4 469.8 Q23.4 470.6 24 471.9 H19.2 Z" fill="#aca5b0"/><path d="M46.1 461.1 L50 464.9 L46.1 468.7 Z" fill="#615a67"/></svg><svg style="position:absolute;left:16px;top:498px" width="40" height="22" viewBox="16 498 40 22"><path d="M19.2 501.4 H38 M19.2 505.8 H22 M23.6 505.8 H38 M24.6 510.4 H31.4 M33 510.4 H38 M28.4 514.8 H32" stroke="#aca5b0" stroke-width="1.8"/><path d="M46.1 505.3 L50 509.1 L46.1 512.9 Z" fill="#615a67"/></svg><svg style="position:absolute;left:16px;top:542px" width="40" height="24" viewBox="16 542 40 24"><path d="M24.2 545.4 H36.2 Q37.6 545.4 37.2 546.8 L34.6 557.4 Q34.2 558.6 33 558.6 H21.4 Q20 558.6 20.4 557.2 L23 546.6 Q23.4 545.4 24.2 545.4 Z" fill="#aca5b0"/><path d="M20.6 558.6 Q20.2 560.8 22 560.8 H33.6 Q35 560.8 35.6 559" fill="none" stroke="#aca5b0" stroke-width="1.2"/><path d="M26.6 548.6 H33.8 M26 551 H33.2" stroke="#342d3b" stroke-width="1.1"/><path d="M46.1 549.7 L50 553.5 L46.1 557.3 Z" fill="#615a67"/></svg><svg style="position:absolute;left:16px;top:586px" width="40" height="24" viewBox="16 586 40 24"><path d="M19.6 590 H22.6 M23.8 590 H27 M28.2 590 H31.4 M32.6 590 H34.4 M19.6 594.4 H24 M19.6 598.8 H23" stroke="#aca5b0" stroke-width="1.8"/><circle cx="31.2" cy="598" r="5" fill="none" stroke="#aca5b0" stroke-width="1.7"/><circle cx="31.2" cy="598" r="1.6" fill="#aca5b0"/><path d="M27.4 601.8 L23.4 606" stroke="#aca5b0" stroke-width="2.2" stroke-linecap="round"/><path d="M46.1 594.7 L50 598.5 L46.1 602.3 Z" fill="#615a67"/></svg><svg style="position:absolute;left:16px;top:630px" width="40" height="26" viewBox="16 630 40 26"><circle cx="28.8" cy="642.6" r="5.4" fill="none" stroke="#aca5b0" stroke-width="1.3"/><ellipse cx="28.8" cy="642.6" rx="2.4" ry="5.4" fill="none" stroke="#aca5b0" stroke-width="1"/><path d="M23.4 642.6 H34.2 M28.8 637.2 V648" stroke="#aca5b0" stroke-width="1"/><circle cx="28.80" cy="634.20" r="1.25" fill="#aca5b0"/><circle cx="36.07" cy="638.40" r="1.25" fill="#aca5b0"/><circle cx="36.07" cy="646.80" r="1.25" fill="#aca5b0"/><circle cx="28.80" cy="651.00" r="1.25" fill="#aca5b0"/><circle cx="21.53" cy="646.80" r="1.25" fill="#aca5b0"/><circle cx="21.53" cy="638.40" r="1.25" fill="#aca5b0"/><path d="M46.1 639.3 L50 643.1 L46.1 646.9 Z" fill="#615a67"/></svg><svg style="position:absolute;left:18px;top:1246px" width="24" height="24" viewBox="18 1246 24 24"><circle cx="28.8" cy="1257.4" r="8.2" fill="#aaa3ae"/><path d="M26.35 1254.40 a2.55 2.45 0 1 1 4.00 1.95 q-1.45 0.80 -1.45 2.30" fill="none" stroke="#1d1224" stroke-width="2.00"/><rect x="27.85" y="1260.10" width="2.10" height="2.10" fill="#1d1224"/></svg><svg style="position:absolute;left:18px;top:1284px" width="30" height="16" viewBox="18 1284 30 16"><circle cx="26.6" cy="1297.4" r="3.8" fill="#aaa3ae"/><rect x="22.8" y="1297" width="7.6" height="6" fill="#aaa3ae"/><circle cx="35.6" cy="1299.6" r="2.8" fill="#aaa3ae"/></svg>
<div style="position:absolute;left:0;top:0;width:1400px;height:1300px;will-change:transform;"><span class="t" id="t0" style="top:22.82px;font-size:11.5px;line-height:15px;color:#fff;font-weight:700;letter-spacing:1.000px;left:90.00px;transform:translateX(-50%);">OK</span>
<span class="t" id="t1" style="top:21.40px;font-size:13px;line-height:17px;color:#232323;letter-spacing:0.181px;left:112.69px;">Monitor status since 2 hours and 19 minutes ago</span>
<span class="t" id="t2" style="top:21.40px;font-size:13px;line-height:17px;color:#838383;letter-spacing:-0.343px;left:404.69px;">(23 Sep, 14:25:56 EDT)</span>
<span class="t" id="t3" style="top:53.99px;font-size:26px;line-height:34px;color:#41c464;letter-spacing:0.779px;left:74.18px;">JVM heap usage is high on {{host.name}}</span>
<span class="t" id="t4" style="top:20.20px;font-size:15px;line-height:20px;color:#232323;letter-spacing:1.000px;left:1273.55px;">Mute</span>
<span class="t" id="t5" style="top:135.62px;font-size:21px;line-height:28px;color:#232323;letter-spacing:0.598px;left:115.13px;">Properties</span>
<span class="t" id="t6" style="top:221.14px;font-size:17.5px;line-height:23px;color:#232323;letter-spacing:0.857px;left:202.18px;">Integration Monitor</span>
<span class="t" id="t7" style="top:243.80px;font-size:15px;line-height:20px;color:#838383;letter-spacing:0.166px;left:202.35px;">ID: 11567254</span>
<span class="t" id="t8" style="top:265.60px;font-size:15px;line-height:20px;color:#838383;letter-spacing:0.052px;left:202.35px;">Created at Sep 13 2019 11:56</span>
<span class="t" id="t9" style="top:287.30px;font-size:15px;line-height:20px;color:#838383;letter-spacing:0.219px;left:202.35px;">by Emily Chang</span>
<span class="t" id="t10" style="top:357.95px;font-size:14px;line-height:19px;color:#232323;font-weight:700;letter-spacing:-0.020px;left:99.82px;">TAGS</span>
<span class="t" id="t11" style="top:221.48px;font-size:14.5px;line-height:19px;color:#232323;font-weight:700;letter-spacing:0.080px;left:496.09px;">QUERY</span>
<span class="t" id="t12" style="top:226.60px;font-size:15px;line-height:20px;color:#232323;font-family:'Liberation Mono', monospace;left:576.05px;">avg(last_5m):avg:jvm.heap_memory{service:coffee-house} by {host} /</span>
<span class="t" id="t13" style="top:247.00px;font-size:15px;line-height:20px;color:#232323;font-family:'Liberation Mono', monospace;left:576.05px;">avg:jvm.heap_memory_max{service:coffee-house} by {host} * 100 &gt; 80</span>
<span class="t" id="t14" style="top:304.05px;font-size:14px;line-height:19px;color:#232323;font-weight:700;letter-spacing:-0.269px;left:479.02px;">MESSAGE</span>
<span class="t" id="t15" style="top:298.00px;font-size:15px;line-height:20px;color:#232323;letter-spacing:0.283px;left:565.15px;">This host is using &gt;80% of max heap. Check garbage collection load and application latency on</span>
<span class="t" id="t16" style="top:298.00px;font-size:15px;line-height:20px;color:#3598cf;letter-spacing:0.638px;left:1226.35px;text-decoration:underline;">this dashboard</span>
<span class="t" id="t17" style="top:298.00px;font-size:15px;line-height:20px;color:#232323;letter-spacing:1.000px;left:1336.15px;">to</span>
<span class="t" id="t18" style="top:319.20px;font-size:15px;line-height:20px;color:#232323;letter-spacing:0.213px;left:565.15px;">search for possible causes.</span>
<span class="t" id="t19" style="top:460.61px;font-size:17px;line-height:23px;color:#a3a3a3;letter-spacing:0.722px;left:130.21px;">Filter monitor groups and their events</span>
<span class="t" id="t20" style="top:508.40px;font-size:15px;line-height:20px;color:#232323;letter-spacing:0.764px;left:137.95px;">Alert</span>
<span class="t" id="t21" style="top:508.40px;font-size:15px;line-height:20px;color:#838383;left:176.05px;">0</span>
<span class="t" id="t22" style="top:508.40px;font-size:15px;line-height:20px;color:#232323;letter-spacing:0.706px;left:240.75px;">Warn</span>
<span class="t" id="t23" style="top:508.40px;font-size:15px;line-height:20px;color:#838383;left:282.85px;">0</span>
<span class="t" id="t24" style="top:508.40px;font-size:15px;line-height:20px;color:#232323;letter-spacing:0.345px;left:348.25px;">No Data</span>
<span class="t" id="t25" style="top:508.40px;font-size:15px;line-height:20px;color:#838383;left:409.55px;">0</span>
<span class="t" id="t26" style="top:508.40px;font-size:15px;line-height:20px;color:#232323;letter-spacing:-0.700px;left:474.65px;">OK</span>
<span class="t" id="t27" style="top:508.40px;font-size:15px;line-height:20px;color:#838383;left:499.85px;">8</span>
<span class="t" id="t28" style="top:508.40px;font-size:15px;line-height:20px;color:#232323;font-weight:700;letter-spacing:0.126px;left:540.45px;">8 of 8 groups</span>
<span class="t" id="t29" style="top:507.90px;font-size:15px;line-height:20px;color:#9a9a9a;letter-spacing:1.000px;left:833.65px;">4h</span>
<span class="t" id="t30" style="top:507.23px;font-size:15.5px;line-height:21px;color:#232323;letter-spacing:-0.117px;left:875.91px;">The Past 4 Hours</span>
<span class="t" id="t31" style="top:564.42px;font-size:21px;line-height:28px;color:#232323;letter-spacing:0.389px;left:115.13px;">Status &amp; History</span>
<span class="t" id="t32" style="top:638.69px;font-size:13.6px;line-height:18px;color:#232323;font-weight:700;letter-spacing:-0.245px;left:202.45px;">GROUP STATUS</span>
<span class="t" id="t33" style="top:639.40px;font-size:15px;line-height:20px;color:#232323;font-weight:700;letter-spacing:0.133px;left:841.95px;">Showing 5 of 8 groups</span>
<span class="t" id="t34" style="top:639.40px;font-size:15px;line-height:20px;color:#fff;left:1058.60px;transform:translateX(-50%);">1</span>
<span class="t" id="t35" style="top:639.40px;font-size:15px;line-height:20px;color:#3598cf;left:1095.30px;transform:translateX(-50%);">2</span>
<span class="t" id="t36" style="top:638.70px;font-size:15px;line-height:20px;color:#232323;letter-spacing:0.528px;left:1167.55px;">Sort by</span>
<span class="t" id="t37" style="top:638.70px;font-size:15px;line-height:20px;color:#232323;letter-spacing:0.670px;left:1237.15px;">Triggered</span>
<span class="t" id="t38" style="top:702.35px;font-size:14px;line-height:19px;color:#232323;font-weight:700;letter-spacing:0.155px;left:260.02px;">NAME</span>
<span class="t" id="t39" style="top:702.89px;font-size:13.6px;line-height:18px;color:#232323;font-weight:700;letter-spacing:-0.051px;left:1288.05px;">VALUE</span>
<span class="t" id="t40" style="top:737.80px;font-size:15px;line-height:20px;color:#232323;letter-spacing:0.342px;left:133.35px;">host:coffeehouse-stag…</span>
<span class="t" id="t41" style="top:737.65px;font-size:14px;line-height:19px;color:#232323;letter-spacing:-0.050px;left:1313.72px;">3.79</span>
<span class="t" id="t42" style="top:782.40px;font-size:15px;line-height:20px;color:#232323;letter-spacing:0.414px;left:133.35px;">host:coffeehouse-prod…</span>
<span class="t" id="t43" style="top:782.25px;font-size:14px;line-height:19px;color:#232323;letter-spacing:-0.050px;left:1313.72px;">3.88</span>
<span class="t" id="t44" style="top:825.00px;font-size:15px;line-height:20px;color:#232323;letter-spacing:0.342px;left:133.35px;">host:coffeehouse-stag…</span>
<span class="t" id="t45" style="top:824.85px;font-size:14px;line-height:19px;color:#232323;letter-spacing:-0.050px;left:1313.72px;">4.76</span>
<span class="t" id="t46" style="top:868.60px;font-size:15px;line-height:20px;color:#232323;letter-spacing:0.342px;left:133.35px;">host:coffeehouse-stag…</span>
<span class="t" id="t47" style="top:869.45px;font-size:14px;line-height:19px;color:#232323;letter-spacing:-0.050px;left:1313.72px;">4.79</span>
<span class="t" id="t48" style="top:912.20px;font-size:15px;line-height:20px;color:#232323;letter-spacing:0.342px;left:133.35px;">host:coffeehouse-stag…</span>
<span class="t" id="t49" style="top:912.05px;font-size:14px;line-height:19px;color:#232323;letter-spacing:-0.050px;left:1313.72px;">5.14</span>
<span class="t" id="t50" style="top:955.09px;font-size:11px;line-height:15px;color:#1c1c1c;letter-spacing:0.242px;left:382.12px;transform:translateX(-50%);">13:00</span>
<span class="t" id="t51" style="top:955.09px;font-size:11px;line-height:15px;color:#1c1c1c;letter-spacing:0.242px;left:499.12px;transform:translateX(-50%);">13:30</span>
<span class="t" id="t52" style="top:955.09px;font-size:11px;line-height:15px;color:#1c1c1c;letter-spacing:0.242px;left:616.12px;transform:translateX(-50%);">14:00</span>
<span class="t" id="t53" style="top:955.09px;font-size:11px;line-height:15px;color:#1c1c1c;letter-spacing:0.242px;left:733.12px;transform:translateX(-50%);">14:30</span>
<span class="t" id="t54" style="top:955.09px;font-size:11px;line-height:15px;color:#1c1c1c;letter-spacing:0.242px;left:850.12px;transform:translateX(-50%);">15:00</span>
<span class="t" id="t55" style="top:955.09px;font-size:11px;line-height:15px;color:#1c1c1c;letter-spacing:0.242px;left:967.12px;transform:translateX(-50%);">15:30</span>
<span class="t" id="t56" style="top:955.09px;font-size:11px;line-height:15px;color:#1c1c1c;letter-spacing:0.242px;left:1084.12px;transform:translateX(-50%);">16:00</span>
<span class="t" id="t57" style="top:955.09px;font-size:11px;line-height:15px;color:#1c1c1c;letter-spacing:0.242px;left:1201.12px;transform:translateX(-50%);">16:30</span>
<span class="t" id="t58" style="top:1000.34px;font-size:12px;line-height:16px;color:#333;letter-spacing:0.178px;left:347.06px;">Alert</span>
<span class="t" id="t59" style="top:1000.34px;font-size:12px;line-height:16px;color:#333;letter-spacing:-0.700px;left:413.46px;">OK</span>
<span class="t" id="t60" style="top:1000.34px;font-size:12px;line-height:16px;color:#333;letter-spacing:-0.172px;left:470.56px;">No Data</span>
<span class="t" id="t61" style="top:1000.34px;font-size:12px;line-height:16px;color:#333;letter-spacing:0.289px;left:554.16px;">Warn</span>
<span class="t" id="t62" style="top:1000.34px;font-size:12px;line-height:16px;color:#333;letter-spacing:0.285px;left:623.76px;">Muted</span>
<span class="t" id="t63" style="top:1054.02px;font-size:13.8px;line-height:18px;color:#232323;font-weight:700;letter-spacing:-0.050px;left:204.43px;">HISTORY</span>
<span class="t" id="t64" style="top:1118.11px;font-size:11px;line-height:15px;color:#222;left:317.80px;transform:translateX(-50%);">6</span>
<span class="t" id="t65" style="top:1150.37px;font-size:11px;line-height:15px;color:#222;left:317.80px;transform:translateX(-50%);">4</span>
<span class="t" id="t66" style="top:1180.63px;font-size:11px;line-height:15px;color:#222;left:317.80px;transform:translateX(-50%);">2</span>
<span class="t" id="t67" style="top:1211.09px;font-size:11px;line-height:15px;color:#222;left:317.80px;transform:translateX(-50%);">0</span>
<span class="t" id="t68" style="top:1226.29px;font-size:11px;line-height:15px;color:#5c5c5c;letter-spacing:0.342px;left:381.57px;transform:translateX(-50%);">13:00</span>
<span class="t" id="t69" style="top:1226.29px;font-size:11px;line-height:15px;color:#5c5c5c;letter-spacing:0.342px;left:498.67px;transform:translateX(-50%);">13:30</span>
<span class="t" id="t70" style="top:1226.29px;font-size:11px;line-height:15px;color:#5c5c5c;letter-spacing:0.342px;left:615.77px;transform:translateX(-50%);">14:00</span>
<span class="t" id="t71" style="top:1226.29px;font-size:11px;line-height:15px;color:#5c5c5c;letter-spacing:0.342px;left:732.87px;transform:translateX(-50%);">14:30</span>
<span class="t" id="t72" style="top:1226.29px;font-size:11px;line-height:15px;color:#5c5c5c;letter-spacing:0.342px;left:849.97px;transform:translateX(-50%);">15:00</span>
<span class="t" id="t73" style="top:1226.29px;font-size:11px;line-height:15px;color:#5c5c5c;letter-spacing:0.342px;left:967.07px;transform:translateX(-50%);">15:30</span>
<span class="t" id="t74" style="top:1226.29px;font-size:11px;line-height:15px;color:#5c5c5c;letter-spacing:0.342px;left:1084.17px;transform:translateX(-50%);">16:00</span>
<span class="t" id="t75" style="top:1226.29px;font-size:11px;line-height:15px;color:#5c5c5c;letter-spacing:0.342px;left:1201.27px;transform:translateX(-50%);">16:30</span>
<span class="t" id="t76" style="top:1254.20px;font-size:15px;line-height:20px;color:#fff;letter-spacing:0.812px;left:1147.41px;transform:translateX(-50%);">1h</span></div>
</body></html>
